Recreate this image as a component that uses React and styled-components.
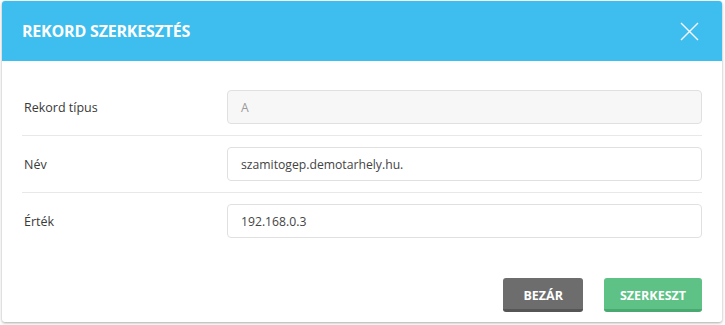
import React from "react";
import styled, { createGlobalStyle } from "styled-components";

const GlobalStyle = createGlobalStyle`
  body {
    margin: 0;
    background: #ffffff;
    font-family: "Open Sans", "Liberation Sans", sans-serif;
  }
`;

const Page = styled.div`
  padding: 1px 3px 3px 2px;
`;

const Dialog = styled.div`
  width: 720px;
  height: 321px;
  background: #ffffff;
  border-radius: 3px;
  box-shadow: 0 1px 3px rgba(0, 0, 0, 0.35);
  display: flex;
  flex-direction: column;
  overflow: hidden;
`;

const Header = styled.div`
  height: 60px;
  background: #3dbeef;
  display: flex;
  align-items: center;
  justify-content: space-between;
  padding: 0 23px 0 20px;
`;

const Title = styled.h2`
  margin: 0;
  color: #ffffff;
  font-size: 16px;
  font-weight: 700;
  letter-spacing: -0.2px;
`;

const CloseButton = styled.button`
  border: 0;
  background: none;
  padding: 0;
  width: 19px;
  height: 19px;
  display: flex;
  cursor: pointer;
`;

const Body = styled.div`
  flex: 1;
  padding: 18px 20px 10px 20px;
  display: flex;
  flex-direction: column;
`;

const Row = styled.div`
  display: grid;
  grid-template-columns: 205px 1fr;
  align-items: center;
  padding: 11px 0;
  border-bottom: ${(p) => (p.$last ? "none" : "1px solid #e8e8e8")};
`;

const Label = styled.label`
  font-size: 12.5px;
  color: #3a3a3a;
  padding-left: 2px;
`;

const Field = styled.div`
  height: 32px;
  border: 1px solid #e0e0e0;
  border-radius: 4px;
  background: ${(p) => (p.$readonly ? "#f7f7f7" : "#ffffff")};
  color: ${(p) => (p.$readonly ? "#9a9a9a" : "#444444")};
  font-size: 12.2px;
  display: flex;
  align-items: center;
  padding: 0 13px;
`;

const Footer = styled.div`
  margin-top: auto;
  display: flex;
  justify-content: flex-end;
  gap: 21px;
`;

const Button = styled.button`
  height: 34px;
  padding: 0 ${(p) => p.$px}px;
  border: 0;
  border-radius: 3px;
  border-bottom: 3px solid ${(p) => p.$shade};
  background: ${(p) => p.$bg};
  color: #ffffff;
  font-family: "Open Sans", "Liberation Sans", sans-serif;
  font-size: 12.5px;
  font-weight: 700;
  padding-top: 3px;
  cursor: pointer;
`;

const rows = [
  { label: "Rekord típus", value: "A", readonly: true },
  { label: "Név", value: "szamitogep.demotarhely.hu." },
  { label: "Érték", value: "192.168.0.3" },
];

export default function App() {
  return (
    <Page>
      <GlobalStyle />
      <Dialog>
        <Header>
          <Title>REKORD SZERKESZTÉS</Title>
          <CloseButton>
            <svg width="19" height="19" viewBox="0 0 19 19">
              <path d="M1 1 L18 18 M18 1 L1 18" stroke="#ffffff" strokeWidth="1.3" />
            </svg>
          </CloseButton>
        </Header>
        <Body>
          {rows.map((r, i) => (
            <Row key={r.label} $last={i === rows.length - 1}>
              <Label>{r.label}</Label>
              <Field $readonly={r.readonly}>{r.value}</Field>
            </Row>
          ))}
          <Footer>
            <Button $bg="#6d6d6d" $shade="#565656" $px={20}>BEZÁR</Button>
            <Button $bg="#5ec186" $shade="#4aa970" $px={16}>SZERKESZT</Button>
          </Footer>
        </Body>
      </Dialog>
    </Page>
  );
}
